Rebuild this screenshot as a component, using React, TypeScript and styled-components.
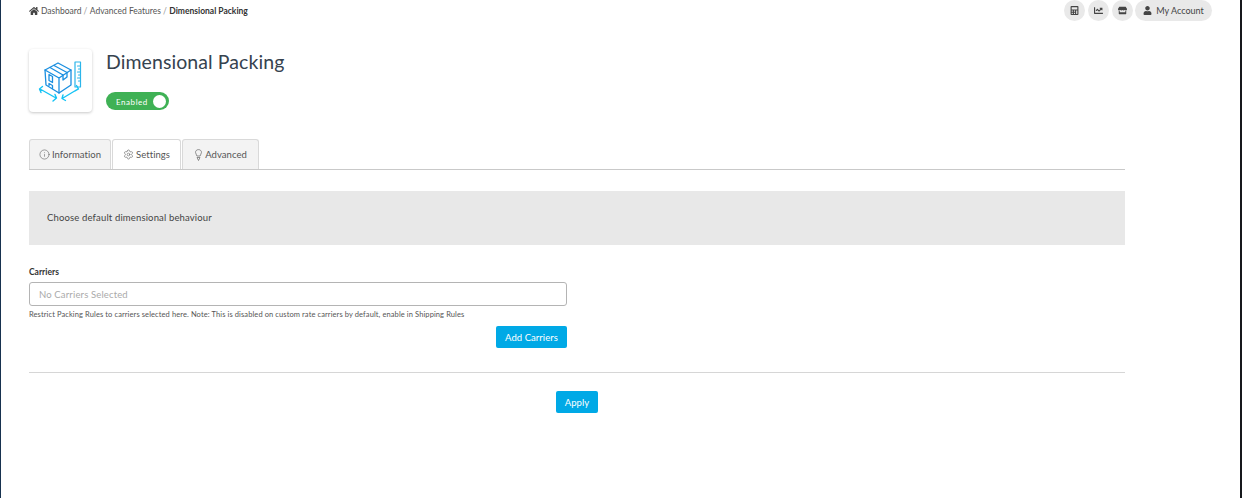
import React from "react";
import styled, { createGlobalStyle } from "styled-components";
import { FaHome, FaUser, FaCalculator, FaStore, FaChartLine } from "react-icons/fa";
import { Settings, Info } from "lucide-react";

const Global = createGlobalStyle`
  html, body { margin: 0; padding: 0; background: #fff; }
  body { font-family: Lato, "Liberation Sans", sans-serif; color: #333; }
  #root { height: 498px; overflow: hidden; }
`;

const Page = styled.div`
  box-sizing: border-box;
  width: 1242px;
  height: 498px;
  border-left: 1px solid #17324f;
  border-right: 2px solid #16181c;
  padding-left: 28px;
`;

const TopBar = styled.div`
  display: flex;
  justify-content: space-between;
  align-items: flex-start;
  width: 1183px;
  height: 49px;
`;

const Crumbs = styled.div`
  display: flex;
  align-items: center;
  height: 21px;
  font-size: 8.5px;
  color: #555;
`;

const Crumb = styled.span<{ $current?: boolean }>`
  font-weight: ${(p) => (p.$current ? 700 : 400)};
  color: ${(p) => (p.$current ? "#333" : "#555")};
`;

const Sep = styled.span`
  margin: 0 2.5px 0 2px;
  color: #999;
`;

const HomeIcon = styled(FaHome)`
  font-size: 10px;
  color: #444;
  margin-right: 2px;
`;

const Actions = styled.div`
  display: flex;
  gap: 3px;
`;

const RoundBtn = styled.div`
  width: 21px;
  height: 21px;
  border-radius: 50%;
  background: #e9e9e9;
  display: flex;
  align-items: center;
  justify-content: center;
  color: #444;
  font-size: 9px;
`;

const AccountBtn = styled.div`
  margin-left: -1px;
  width: 77px;
  height: 21px;
  border-radius: 11px;
  background: #e9e9e9;
  display: flex;
  align-items: center;
  justify-content: center;
  gap: 4px;
  color: #444;
  font-size: 9px;
`;

const Main = styled.div`
  width: 1096px;
`;

const Header = styled.div`
  display: flex;
  gap: 14px;
  height: 90px;
`;

const LogoCard = styled.div`
  width: 63px;
  height: 63px;
  border-radius: 4px;
  background: #fff;
  box-shadow: 0 1px 3px rgba(0, 0, 0, 0.22);
  display: flex;
`;

const HeadText = styled.div`
  display: flex;
  flex-direction: column;
  align-items: flex-start;
`;

const Title = styled.h1`
  margin: 0;
  height: 43px;
  line-height: 26px;
  font-size: 19.5px;
  font-weight: 400;
  color: #36434f;
  letter-spacing: 0.08px;
`;

const Toggle = styled.div`
  box-sizing: border-box;
  width: 63px;
  height: 18px;
  border-radius: 9px;
  background: #3fb155;
  color: #fff;
  font-size: 8px;
  letter-spacing: 0.55px;
  display: flex;
  align-items: center;
  justify-content: space-between;
  padding: 0 3px 0 10px;
`;

const ToggleLabel = styled.span`
  padding-top: 2px;
`;

const Knob = styled.span`
  width: 13px;
  height: 13px;
  border-radius: 50%;
  background: #fff;
`;

const Tabs = styled.div`
  display: flex;
  gap: 1px;
  height: 30px;
  border-bottom: 1px solid #c9c9c9;
`;

const Tab = styled.div<{ $active?: boolean; $w: number }>`
  box-sizing: border-box;
  width: ${(p) => p.$w}px;
  height: 30px;
  display: flex;
  align-items: center;
  justify-content: center;
  gap: 2px;
  background: ${(p) => (p.$active ? "#fff" : "#f3f3f3")};
  border: 1px solid #d9d9d9;
  border-bottom: none;
  border-radius: 3px 3px 0 0;
  font-size: 9.5px;
  letter-spacing: 0.05px;
  color: #555;
`;

const Banner = styled.div`
  margin-top: 21px;
  box-sizing: border-box;
  height: 54px;
  background: #e8e8e8;
  display: flex;
  align-items: center;
  padding: 0 0 2px 18px;
  font-size: 9.5px;
  letter-spacing: 0.15px;
  color: #444;
`;

const Label = styled.div`
  margin-top: 22px;
  height: 15px;
  line-height: 11px;
  font-size: 8.5px;
  font-weight: 700;
  color: #333;
`;

const FieldWrap = styled.div`
  width: 538px;
  display: flex;
  flex-direction: column;
  align-items: flex-end;
`;

const Field = styled.div`
  box-sizing: border-box;
  width: 100%;
  height: 24px;
  border: 1px solid #b4b4b4;
  border-radius: 3px;
  display: flex;
  align-items: center;
  padding-left: 9px;
  font-size: 9.5px;
  letter-spacing: 0.15px;
  color: #aaa;
`;

const Help = styled.div`
  width: 100%;
  height: 20px;
  line-height: 17px;
  font-size: 7.5px;
  letter-spacing: 0.1px;
  color: #555;
`;

const Button = styled.button<{ $w: number }>`
  box-sizing: border-box;
  width: ${(p) => p.$w}px;
  height: 22px;
  padding: 0;
  border: none;
  border-radius: 2px;
  background: #00a9e6;
  color: #fff;
  font-family: inherit;
  font-size: 9.5px;
  letter-spacing: 0.05px;
`;

const Rule = styled.hr`
  margin: 24px 0 18px;
  border: none;
  border-top: 1px solid #d6d6d6;
`;

const Footer = styled.div`
  display: flex;
  justify-content: center;
`;

const BulbIcon = () => (
  <svg width="9" height="12" viewBox="0 0 9 12" fill="none" stroke="#666" strokeWidth="0.7" strokeLinejoin="round">
    <path d="M4.500 .6C2.700 .6 1.500 1.900 1.500 3.300c0 1.400 1.200 2.200 1.400 3.700h3.200C6.300 5.500 7.500 4.700 7.500 3.300 7.500 1.900 6.300 .6 4.500 .6zM3 8.500 4.500 11.500 6 8.500M3 8.500h3" />
  </svg>
);

const BoxLogo = () => (
  <svg width="63" height="63" viewBox="0 0 63 63" fill="none" strokeLinejoin="round" strokeLinecap="round">
    <g stroke="#1a8fe0" strokeWidth="1.3">
      <path d="M16 21 29 14 42 21v15L30 44 17 36z" />
      <path d="M16 21l14 8 12-8M30 29v15" />
      <path d="M21 18.500l13 7.500M25 16.500l13 7M34 26v5l4-3v-4.500" />
      <path d="M20 25.500v6l3.500 2v-6zM20 36.500v-2l3.500 2v3" />
    </g>
    <g stroke="#2bb5ea" strokeWidth="1.200">
      <path d="M46 13h5.500v25H46zM48.500 17h3M49.500 20h2M48.500 23h3M49.500 26h2M48.500 29h3M49.500 32h2" />
    </g>
    <g stroke="#14c3f5" strokeWidth="1.400">
      <path d="M11 40l16 9M13.500 37.500 10.500 40l1.500 3.500M24 52l3.500-3-1.500-3.500" />
      <path d="M34 49l15-9M34 46l-1 3.500 3.500 2M47.500 36.500l2 3.500-3.500 2" />
    </g>
  </svg>
);

export default function App() {
  return (
    <Page>
      <Global />
      <TopBar>
        <Crumbs>
          <HomeIcon />
          <Crumb>Dashboard</Crumb>
          <Sep>/</Sep>
          <Crumb>Advanced Features</Crumb>
          <Sep>/</Sep>
          <Crumb $current>Dimensional Packing</Crumb>
        </Crumbs>
        <Actions>
          <RoundBtn><FaCalculator /></RoundBtn>
          <RoundBtn><FaChartLine /></RoundBtn>
          <RoundBtn><FaStore /></RoundBtn>
          <AccountBtn><FaUser />My Account</AccountBtn>
        </Actions>
      </TopBar>
      <Main>
        <Header>
          <LogoCard><BoxLogo /></LogoCard>
          <HeadText>
            <Title>Dimensional Packing</Title>
            <Toggle><ToggleLabel>Enabled</ToggleLabel><Knob /></Toggle>
          </HeadText>
        </Header>
        <Tabs>
          <Tab $w={82}><Info size={11} strokeWidth={1.2} />Information</Tab>
          <Tab $w={69} $active><Settings size={11} strokeWidth={1.2} />Settings</Tab>
          <Tab $w={77}><BulbIcon />Advanced</Tab>
        </Tabs>
        <Banner>Choose default dimensional behaviour</Banner>
        <Label>Carriers</Label>
        <FieldWrap>
          <Field>No Carriers Selected</Field>
          <Help>Restrict Packing Rules to carriers selected here. Note: This is disabled on custom rate carriers by default, enable in Shipping Rules</Help>
          <Button $w={71}>Add Carriers</Button>
        </FieldWrap>
        <Rule />
        <Footer><Button $w={42}>Apply</Button></Footer>
      </Main>
    </Page>
  );
}
